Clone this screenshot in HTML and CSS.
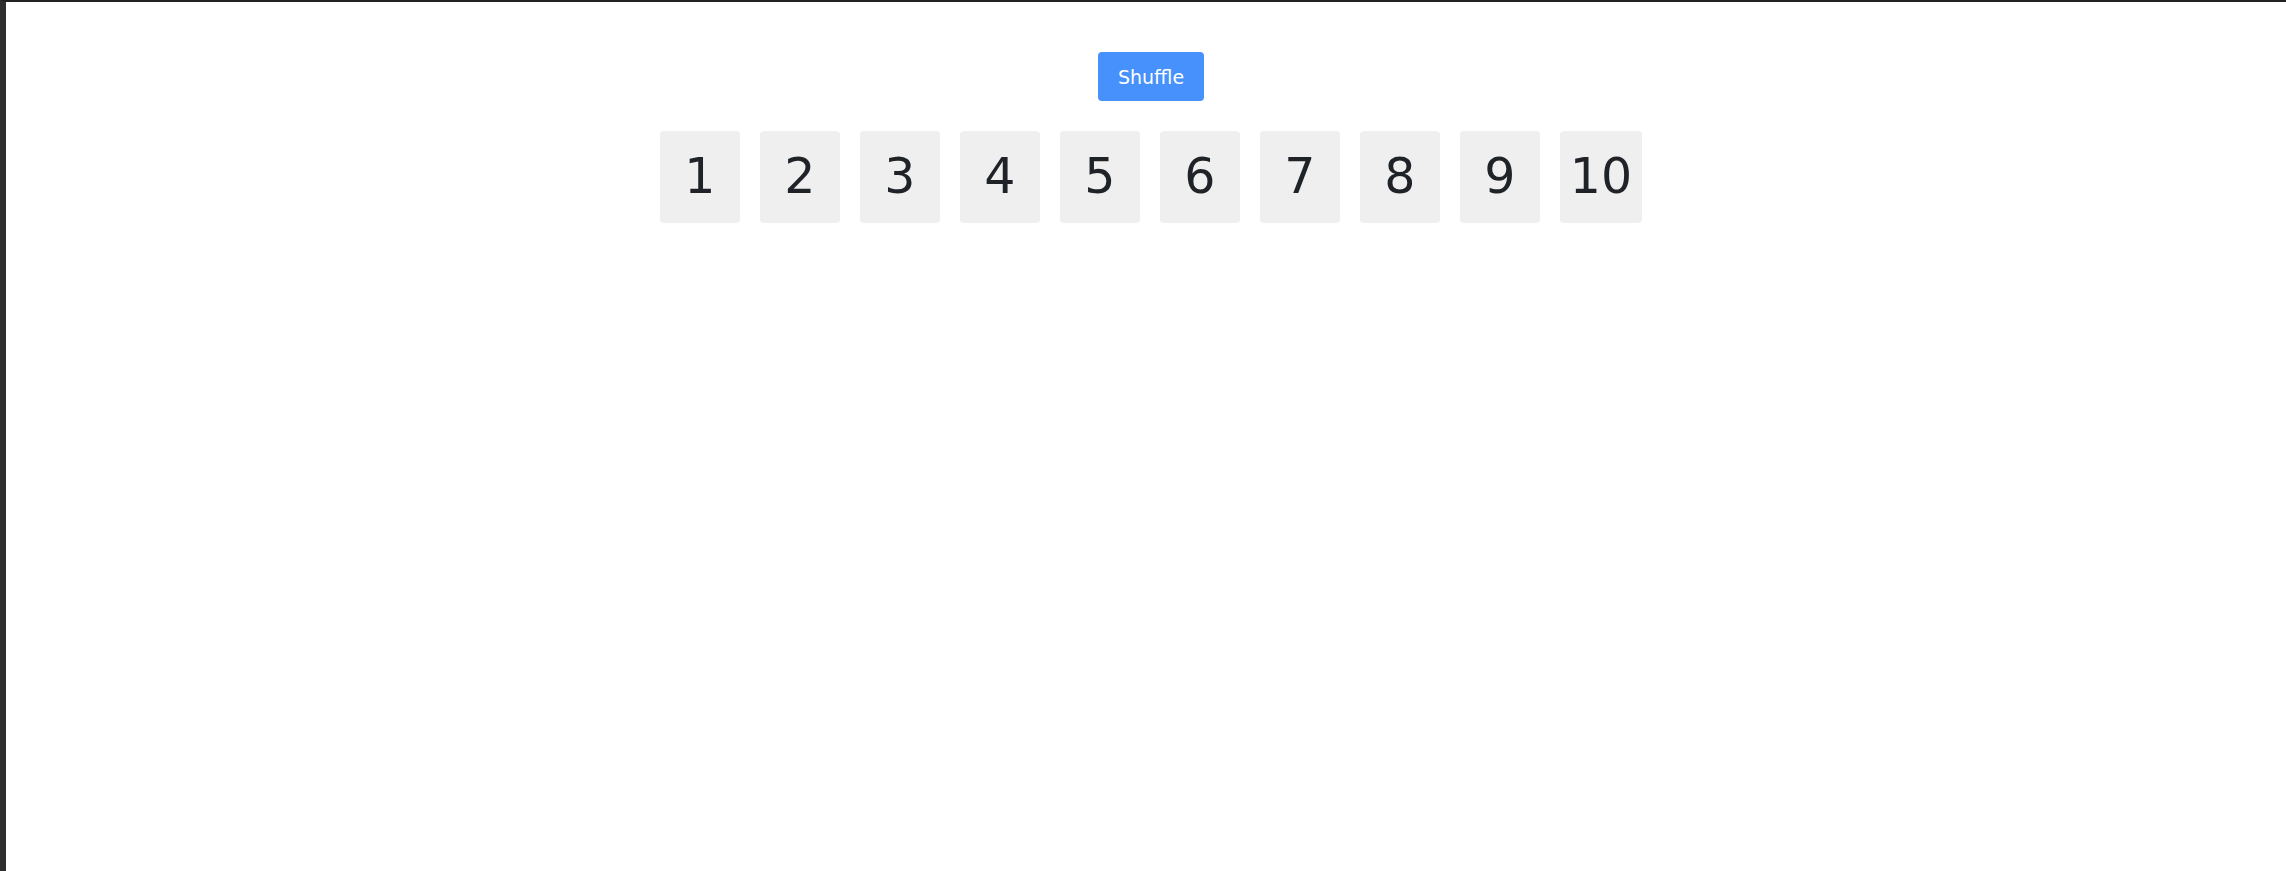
FILE: index.html
```html
<!DOCTYPE html>
<html>
<head>
<meta charset="utf-8">
<link rel="stylesheet" href="styles.css">
</head>
<body>
<div class="frame">
  <main class="app">
    <button class="shuffle">Shuffle</button>
    <div class="tiles">
      <div class="tile">1</div>
      <div class="tile">2</div>
      <div class="tile">3</div>
      <div class="tile">4</div>
      <div class="tile">5</div>
      <div class="tile">6</div>
      <div class="tile">7</div>
      <div class="tile">8</div>
      <div class="tile">9</div>
      <div class="tile">10</div>
    </div>
  </main>
</div>
</body>
</html>
```

FILE: styles.css
```css
html, body {
  margin: 0;
  padding: 0;
  height: 100%;
}
body {
  background: #ffffff;
  border-top: 2px solid #222222;
  border-left: 6px solid #2e2e2e;
  box-sizing: border-box;
  font-family: "DejaVu Sans", sans-serif;
  position: relative;
}
body::before {
  content: "";
  position: absolute;
  left: -6px;
  top: 74px;
  width: 6px;
  height: 1px;
  background: #555555;
}
.frame {
  padding-left: 10px;
}
.app {
  display: flex;
  flex-direction: column;
  align-items: center;
  padding-top: 50px;
}
.shuffle {
  height: 49px;
  padding: 0 20px;
  border: none;
  border-radius: 4px;
  background: #4691fb;
  color: #ffffff;
  font-family: "DejaVu Sans", sans-serif;
  font-size: 19px;
  cursor: pointer;
}
.tiles {
  display: flex;
  gap: 20px;
  margin-top: 30px;
}
.tile {
  min-width: 80px;
  height: 92px;
  padding: 0 10px;
  box-sizing: border-box;
  display: flex;
  align-items: center;
  justify-content: center;
  background: #efefef;
  border-radius: 4px;
  color: #1f2328;
  font-size: 49px;
  padding-bottom: 2px;
}
```
